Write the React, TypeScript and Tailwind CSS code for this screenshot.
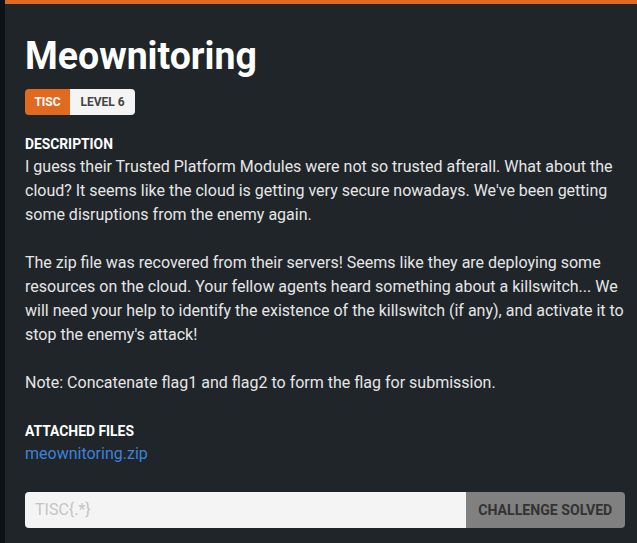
import React from "react";

export default function App() {
  return (
    <div className="w-[637px] h-[543px] bg-[#0e1214] flex overflow-hidden" style={{ fontFamily: 'Roboto, sans-serif' }}>
      <div className="ml-[5px] flex-1 bg-[#1f2529] border-t-4 border-[#e06a1f] flex flex-col pl-[20px] pr-[12px] pt-[30px]">
        <h1 className="text-[39px] font-bold text-white leading-[44px] inline-block origin-left scale-x-[0.96] whitespace-nowrap">Meownitoring</h1>
        <div className="mt-[11px] flex">
          <span className="h-[26px] w-[45px] flex items-center justify-center bg-[#e06a1f] text-white text-[12px] font-bold rounded-l-[4px]">TISC</span>
          <span className="h-[26px] w-[65px] flex items-center justify-center bg-[#f4f4f4] text-[#444] text-[12px] font-bold rounded-r-[4px]">LEVEL 6</span>
        </div>
        <div className="mt-[19px] text-[15px] font-bold text-white leading-[21px]"><span className="inline-block origin-left scale-x-[0.92] whitespace-nowrap">DESCRIPTION</span></div>
        <div className="text-[16px] leading-[24px] text-[#e6e6e6]">
          <p>I guess their Trusted Platform Modules were not so trusted afterall. What about the cloud? It seems like the cloud is getting very secure nowadays. We've been getting some disruptions from the enemy again.</p>
          <p className="mt-[24px]">The zip file was recovered from their servers! Seems like they are deploying some resources on the cloud. Your fellow agents heard something about a killswitch... We will need your help to identify the existence of the killswitch (if any), and activate it to stop the enemy's attack!</p>
          <p className="mt-[24px]">Note: Concatenate flag1 and flag2 to form the flag for submission.</p>
        </div>
        <div className="mt-[26px] text-[15px] font-bold text-white leading-[21px]"><span className="inline-block origin-left scale-x-[0.925] whitespace-nowrap">ATTACHED FILES</span></div>
        <a className="text-[16px] leading-[24px] text-[#3d82db] self-start">meownitoring.zip</a>
        <div className="mt-[26px] flex h-[36px]">
          <div className="flex-1 bg-[#f4f4f4] rounded-l-[4px] flex items-center px-[10px] text-[16px] text-[#c4c4c4]">TISC{'{'}.*{'}'}</div>
          <div className="w-[159px] bg-[#808080] rounded-r-[4px] flex items-center justify-center text-[15px] font-bold text-[#333]"><span className="inline-block scale-x-[0.94] whitespace-nowrap">CHALLENGE SOLVED</span></div>
        </div>
      </div>
    </div>
  );
}
